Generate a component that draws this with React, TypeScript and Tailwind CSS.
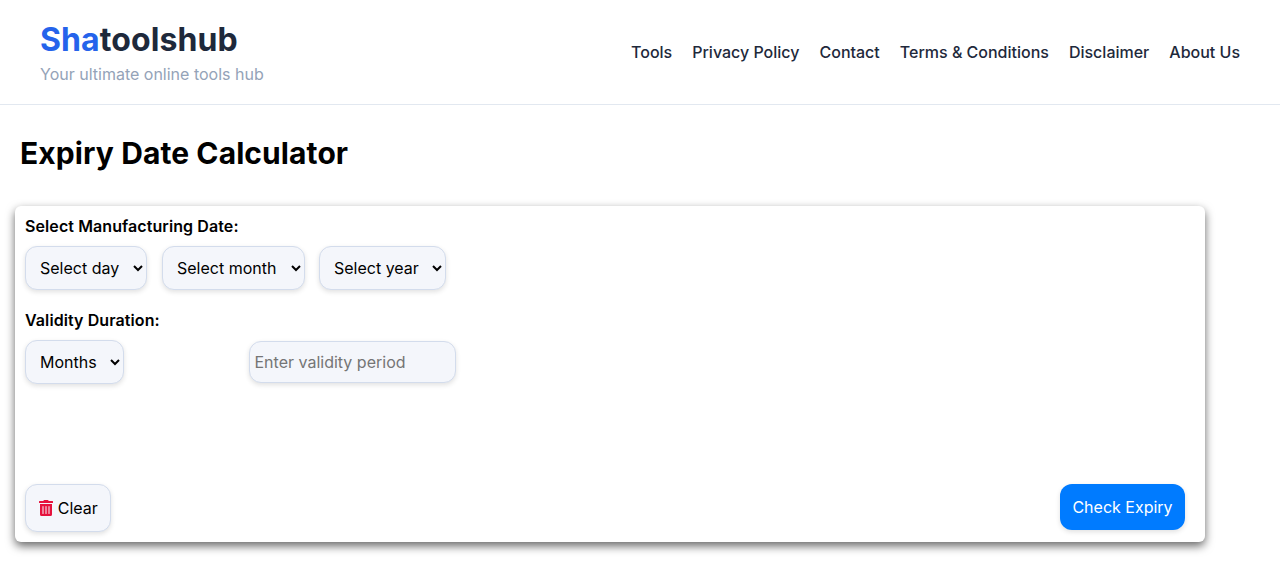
import { FaTrashAlt } from "react-icons/fa";

const links = ["Tools", "Privacy Policy", "Contact", "Terms & Conditions", "Disclaimer", "About Us"];
const selectCls =
  "h-[44px] px-[10px] rounded-[12px] border border-[#d3dcec] bg-[#f4f6fb] text-[16px] text-black shadow-[0_2px_5px_rgba(0,0,0,0.12)]";

export default function App() {
  return (
    <div className="min-h-[568px] bg-white font-['Inter',sans-serif] text-black">
      <header className="h-[105px] border-b border-[#e2e8f0] px-10 flex items-center justify-between">
        <div className="flex flex-col pt-[1px]">
          <div className="text-[32px] leading-[40px] font-bold tracking-[0.09px] text-[#1e293b]">
            <span className="text-[#2563eb]">Sha</span>toolshub
          </div>
          <div className="mt-[2px] text-[16px] leading-[24px] text-[#94a3b8]">Your ultimate online tools hub</div>
        </div>
        <nav className="flex gap-5 text-[16px] font-medium text-[#1e293b]">
          {links.map((l) => (
            <a key={l}>{l}</a>
          ))}
        </nav>
      </header>
      <h1 className="ml-5 mt-[27px] text-[30px] leading-[42px] font-bold tracking-[0.09px]">Expiry Date Calculator</h1>
      <div className="ml-[15px] mt-[32px] w-[1190px] h-[336px] rounded-[6px] bg-white shadow-[0_4px_10px_rgba(0,0,0,0.6)] p-[10px] flex flex-col">
        <label className="text-[16px] leading-[20px] font-semibold tracking-[0.09px]">Select Manufacturing Date:</label>
        <div className="mt-[10px] flex gap-[15px]">
          <select className={`${selectCls} w-[122px]`}><option>Select day</option></select>
          <select className={`${selectCls} w-[143px] mr-[-1px]`}><option>Select month</option></select>
          <select className={`${selectCls} w-[127px]`}><option>Select year</option></select>
        </div>
        <label className="mt-[20px] text-[16px] leading-[20px] font-semibold tracking-[0.09px]">Validity Duration:</label>
        <div className="mt-[10px] flex items-center gap-[125px]">
          <select className={`${selectCls} w-[99px]`}><option>Months</option></select>
          <input
            placeholder="Enter validity period"
            className="h-[42px] w-[207px] px-[4.5px] rounded-[12px] border border-[#d3dcec] bg-[#f4f6fb] text-[16px] placeholder:text-[#757575] shadow-[0_2px_5px_rgba(0,0,0,0.12)]"
          />
        </div>
        <div className="mt-auto flex items-start justify-between pr-[10px]">
          <button className="h-[48px] w-[86px] rounded-[12px] border border-[#d3dcec] bg-[#f4f6fb] text-[16px] flex items-center justify-center gap-[3.5px] shadow-[0_2px_5px_rgba(0,0,0,0.12)]">
            <FaTrashAlt className="text-[#e6123d] text-[16px]" />
            Clear
          </button>
          <button className="h-[46px] w-[125px] rounded-[12px] bg-[#007bff] text-white text-[16px] shadow-[0_2px_5px_rgba(0,0,0,0.12)]">
            Check Expiry
          </button>
        </div>
      </div>
    </div>
  );
}
